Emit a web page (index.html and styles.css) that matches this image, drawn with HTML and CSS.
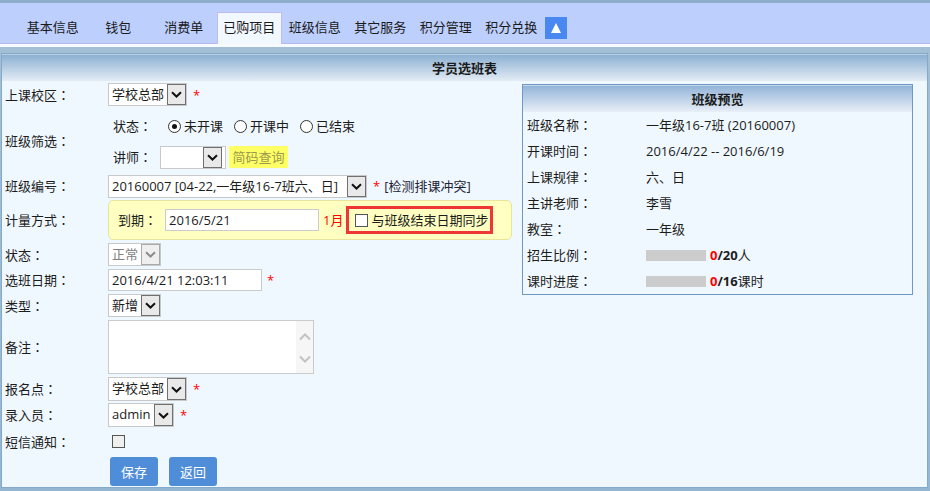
FILE: index.html
```html
<!DOCTYPE html>
<html>
<head>
  <meta charset="utf-8">
  <title>学员选班表</title>
  <link rel="stylesheet" href="styles.css">
</head>
<body>
  <div class="tabbar">
    <ul class="tabs">
      <li>基本信息</li>
      <li>钱包</li>
      <li>消费单</li>
      <li class="active">已购项目</li>
      <li>班级信息</li>
      <li>其它服务</li>
      <li>积分管理</li>
      <li>积分兑换</li>
      <li class="up"><span class="tri"></span></li>
    </ul>
  </div>

  <div class="main">
    <div class="panel">
      <div class="panel-title">学员选班表</div>
      <div class="panel-body">

        <div class="form">
          <div class="row h23">
            <span class="label">上课校区<i>：</i></span>
            <span class="select w79"><span class="val">学校总部</span><span class="arrow"><svg width="11" height="7" viewBox="0 0 11 7"><path d="M1 1.2l4.5 4.3 4.5-4.3" /></svg></span></span>
            <span class="req">*</span>
          </div>

          <div class="row h63">
            <span class="label">班级筛选<i>：</i></span>
            <div class="filter">
              <div class="sub">
                <span class="sublabel">状态<i>：</i></span>
                <span class="radios">
                  <span class="radio checked"></span><span class="opt">未开课</span>
                  <span class="radio"></span><span class="opt">开课中</span>
                  <span class="radio"></span><span class="opt">已结束</span>
                </span>
              </div>
              <div class="sub">
                <span class="sublabel">讲师<i>：</i></span>
                <span class="select w66 gap"><span class="val"></span><span class="arrow"><svg width="11" height="7" viewBox="0 0 11 7"><path d="M1 1.2l4.5 4.3 4.5-4.3" /></svg></span></span>
                <span class="code-search">简码查询</span>
              </div>
            </div>
          </div>

          <div class="row h22">
            <span class="label">班级编号<i>：</i></span>
            <span class="select w259"><span class="val">20160007 [04-22,一年级16-7班六、日]</span><span class="arrow"><svg width="11" height="7" viewBox="0 0 11 7"><path d="M1 1.2l4.5 4.3 4.5-4.3" /></svg></span></span>
            <span class="req">*</span>
            <span class="check-link">[检测排课冲突]</span>
          </div>

          <div class="row h40">
            <span class="label">计量方式<i>：</i></span>
            <div class="period">
              <span>到期<i>：</i></span>
              <input class="text w154 due" type="text" value="2016/5/21">
              <span class="month">1月</span>
              <span class="sync"><span class="checkbox"></span>与班级结束日期同步</span>
            </div>
          </div>

          <div class="row h23">
            <span class="label">状态<i>：</i></span>
            <span class="select w53 disabled"><span class="val">正常</span><span class="arrow"><svg width="11" height="7" viewBox="0 0 11 7"><path d="M1 1.2l4.5 4.3 4.5-4.3" /></svg></span></span>
          </div>

          <div class="row h22">
            <span class="label">选班日期<i>：</i></span>
            <input class="text w154" type="text" value="2016/4/21 12:03:11">
            <span class="req far">*</span>
          </div>

          <div class="row h23">
            <span class="label">类型<i>：</i></span>
            <span class="select w53"><span class="val">新增</span><span class="arrow"><svg width="11" height="7" viewBox="0 0 11 7"><path d="M1 1.2l4.5 4.3 4.5-4.3" /></svg></span></span>
          </div>

          <div class="row h54">
            <span class="label">备注<i>：</i></span>
            <div class="memo">
              <div class="memo-text"></div>
              <div class="memo-scroll">
                <svg width="12" height="8" viewBox="0 0 12 8"><path d="M1 6.5l5-5 5 5" /></svg>
                <svg width="12" height="8" viewBox="0 0 12 8"><path d="M1 1.5l5 5 5-5" /></svg>
              </div>
            </div>
          </div>

          <div class="row h24">
            <span class="label">报名点<i>：</i></span>
            <span class="select w79 tall"><span class="val">学校总部</span><span class="arrow"><svg width="11" height="7" viewBox="0 0 11 7"><path d="M1 1.2l4.5 4.3 4.5-4.3" /></svg></span></span>
            <span class="req">*</span>
          </div>

          <div class="row h24 tight">
            <span class="label">录入员<i>：</i></span>
            <span class="select w66 tall"><span class="val">admin</span><span class="arrow"><svg width="11" height="7" viewBox="0 0 11 7"><path d="M1 1.2l4.5 4.3 4.5-4.3" /></svg></span></span>
            <span class="req">*</span>
          </div>

          <div class="row h23">
            <span class="label">短信通知<i>：</i></span>
            <span class="checkbox sms"></span>
          </div>

          <div class="row h29 buttons">
            <span class="label"></span>
            <button class="btn">保存</button>
            <button class="btn">返回</button>
          </div>
        </div>

        <div class="preview">
          <div class="preview-title">班级预览</div>
          <div class="info"><span class="k">班级名称<i>：</i></span><span class="v">一年级16-7班 (20160007)</span></div>
          <div class="info"><span class="k">开课时间<i>：</i></span><span class="v">2016/4/22 -- 2016/6/19</span></div>
          <div class="info"><span class="k">上课规律<i>：</i></span><span class="v">六、日</span></div>
          <div class="info"><span class="k">主讲老师<i>：</i></span><span class="v">李雪</span></div>
          <div class="info"><span class="k">教室<i>：</i></span><span class="v">一年级</span></div>
          <div class="info"><span class="k">招生比例<i>：</i></span><span class="v"><span class="bar"></span><b class="red">0</b><b>/20</b>人</span></div>
          <div class="info"><span class="k">课时进度<i>：</i></span><span class="v"><span class="bar"></span><b class="red">0</b><b>/16</b>课时</span></div>
        </div>

      </div>
    </div>
  </div>
</body>
</html>
```

FILE: styles.css
```css
* {
  box-sizing: border-box;
}

body {
  margin: 0;
  width: 930px;
  height: 491px;
  overflow: hidden;
  font-family: "Open Sans", "Noto Sans CJK SC", sans-serif;
  font-size: 13px;
  line-height: 18px;
  color: #1c1c1c;
  background: #9cbad3;
}

/* full-width colon, centred like the original font */
i {
  font-style: normal;
  font-family: "Noto Sans CJK TC", "Noto Sans CJK SC", sans-serif;
}

/* top tabs */
.tabbar {
  border-top: 3px solid #8badc9;
  border-bottom: 3px solid #f7fbff;
  background: #bdcffd;
}

.tabs {
  display: flex;
  align-items: flex-end;
  height: 41px;
  margin: 0;
  padding: 0 0 0 20px;
  list-style: none;
  border-bottom: 1px solid #b4b8ee;
}

.tabs li {
  width: 65.5px;
  height: 31px;
  line-height: 30px;
  text-align: center;
  color: #1a1a1a;
}

.tabs li.active {
  background: #f2f8ff;
  border: 1px solid #c2b9f2;
  border-bottom: 0;
  line-height: 29px;
  margin-bottom: -1px;
  height: 32px;
}

.tabs li.up {
  width: 22px;
  height: 22px;
  margin: 0 0 4px 1px;
  background: #4a88f1;
  display: flex;
  align-items: center;
  justify-content: center;
}

.tri {
  width: 0;
  height: 0;
  border-left: 5px solid transparent;
  border-right: 5px solid transparent;
  border-bottom: 10px solid #fff;
}

/* panel */
.main {
  height: 444px;
  padding: 6px 2px 3px 1px;
  background: linear-gradient(#a3bfd6, #95b6d3);
}

.panel {
  height: 435px;
  border: 1px solid #83a9cb;
  background: #f0f8ff;
}

.panel-title {
  height: 27px;
  line-height: 27px;
  text-align: center;
  font-weight: bold;
  color: #1a1a1a;
  border-top: 1px solid #b7d0e6;
  background: linear-gradient(#8cb0d3, #e3ecf4);
}

.panel-body {
  display: flex;
  padding-top: 2px;
}

/* form */
.form {
  width: 520px;
  padding-left: 3px;
  display: flex;
  flex-direction: column;
  gap: 3px;
}

.row {
  display: flex;
  align-items: center;
}

.row.tight {
  margin-top: -1px;
}

.h22 { height: 22px; }
.h23 { height: 23px; }
.h24 { height: 24px; }
.h29 { height: 29px; margin-top: 1px; }
.h40 { height: 40px; }
.h54 { height: 54px; }
.h63 { height: 63px; }

.label {
  width: 103px;
  flex: none;
  color: #1c1c1c;
}

.select {
  display: inline-flex;
  align-items: stretch;
  height: 23px;
  border: 1px solid #c9c9c9;
  background: #fff;
  flex: none;
}

.select.tall {
  height: 24px;
}

.select .val {
  flex: 1;
  min-width: 0;
  padding-left: 3px;
  line-height: 21px;
  white-space: nowrap;
  overflow: hidden;
}

.select .arrow {
  width: 19px;
  flex: none;
  border: 1px solid #707070;
  background: #e9e9e9;
  display: flex;
  align-items: center;
  justify-content: center;
}

.select .arrow path {
  fill: none;
  stroke: #111;
  stroke-width: 2;
}

.select.gap .arrow {
  margin-right: 3px;
}

.select.disabled .val {
  color: #808080;
}

.select.disabled .arrow {
  border-color: #a9a9a9;
  background: #efefef;
}

.select.disabled .arrow path {
  stroke: #8c8c8c;
}

.w53 { width: 53px; }
.w66 { width: 66px; }
.w79 { width: 79px; }
.w154 { width: 154px; }
.w259 { width: 259px; }

.req {
  color: #f00;
  margin-left: 6px;
  font-size: 13px;
}

.req.far {
  margin-left: 5px;
}

.check-link {
  margin-left: 4px;
  color: #223;
}

.text {
  height: 22px;
  border: 1px solid #cbcbcb;
  background: #fff;
  padding: 0 3px;
  font: inherit;
  color: #1c1c1c;
  outline: none;
  flex: none;
}

/* filter block */
.filter {
  padding: 6px 0 4px 5px;
  display: flex;
  flex-direction: column;
  gap: 9px;
}

.sub {
  display: flex;
  align-items: center;
  height: 22px;
}

.sublabel {
  width: 47px;
}

.radios {
  display: flex;
  align-items: center;
  margin-left: 8px;
}

.radio {
  width: 13px;
  height: 13px;
  border: 1px solid #333;
  border-radius: 50%;
  background: #fff;
  position: relative;
}

.radio.checked::after {
  content: "";
  position: absolute;
  left: 3px;
  top: 3px;
  width: 5px;
  height: 5px;
  border-radius: 50%;
  background: #111;
}

.opt {
  margin: 0 11px 0 3px;
}

.code-search {
  margin-left: 3px;
  width: 59px;
  height: 22px;
  line-height: 22px;
  text-align: center;
  background: #ffff66;
  color: #9a9a4e;
}

/* expiry box */
.period {
  width: 404px;
  height: 40px;
  display: flex;
  align-items: center;
  padding-left: 9px;
  background: #ffffc2;
  border: 1px solid #e8e49c;
  border-radius: 5px;
}

.due {
  margin-left: 8px;
}

.month {
  color: #f00;
  margin-left: 4px;
}

.sync {
  display: flex;
  align-items: center;
  height: 28px;
  margin-left: 3px;
  padding: 0 2px 0 6px;
  border: 3px solid #ee3636;
}

.checkbox {
  width: 13px;
  height: 13px;
  border: 1px solid #555;
  background: #fff;
  margin-right: 3px;
  flex: none;
}

.checkbox.sms {
  margin-left: 4px;
  background: #efefef;
}

/* remark */
.memo {
  width: 206px;
  height: 54px;
  display: flex;
  border: 1px solid #cbcbcb;
  background: #fff;
}

.memo-text {
  flex: 1;
}

.memo-scroll {
  width: 17px;
  background: #f6f6f6;
  display: flex;
  flex-direction: column;
  align-items: center;
  justify-content: space-between;
  padding: 12px 0 10px;
}

.memo-scroll path {
  fill: none;
  stroke: #c3c3c3;
  stroke-width: 2;
}

/* buttons */
.btn {
  width: 48px;
  height: 29px;
  margin-left: 2px;
  border: 0;
  border-radius: 3px;
  background: #4f8dd8;
  color: #fff;
  font: inherit;
  padding: 0;
}

.btn + .btn {
  margin-left: 11px;
}

/* class preview */
.preview {
  width: 391px;
  height: 211px;
  border: 1px solid #6f97c7;
  background: #f0f8ff;
  margin-top: 1px;
}

.preview-title {
  height: 27px;
  line-height: 27px;
  text-align: center;
  font-weight: bold;
  border-top: 1px solid #c4d7ea;
  background: linear-gradient(#93b4d8, #e8eff7);
}

.info {
  display: flex;
  align-items: center;
  height: 26px;
  padding-left: 4px;
}

.info .k {
  width: 119px;
  flex: none;
}

.info .v {
  display: flex;
  align-items: center;
}

.bar {
  display: inline-block;
  width: 60px;
  height: 11px;
  background: #cccccc;
  margin-right: 4px;
}

.red {
  color: #f00;
}
```
